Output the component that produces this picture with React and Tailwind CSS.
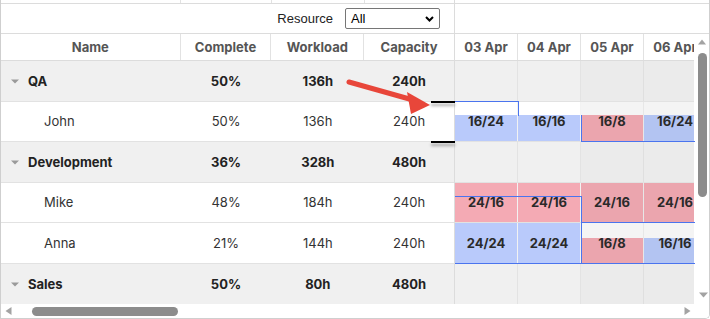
import React from "react";

const BLUE = "#b9cafb";
const BLUEW = "#b3c4f2";
const PINK = "#f4aab4";
const PINKW = "#eba5ae";

const rows = [
  { group: true, name: "QA", c: "50%", w: "136h", cap: "240h", h: "h-[41px]" },
  {
    group: false, name: "John", c: "50%", w: "136h", cap: "240h", h: "h-[40px]",
    cells: [
      { bg: BLUE, bh: 26, t: "16/24" },
      { bg: BLUE, bh: 26, t: "16/16" },
      { bg: PINKW, bh: 26, t: "16/8" },
      { bg: BLUEW, bh: 26, t: "16/24" },
    ],
  },
  { group: true, name: "Development", c: "36%", w: "328h", cap: "480h", h: "h-[41px]" },
  {
    group: false, name: "Mike", c: "48%", w: "184h", cap: "240h", h: "h-[40px]",
    cells: [
      { bg: PINK, bh: 39, t: "24/16" },
      { bg: PINK, bh: 39, t: "24/16" },
      { bg: PINKW, bh: 39, t: "24/16" },
      { bg: PINKW, bh: 39, t: "24/16" },
    ],
  },
  {
    group: false, name: "Anna", c: "21%", w: "144h", cap: "240h", h: "h-[41px]",
    cells: [
      { bg: BLUE, bh: 40, t: "24/24" },
      { bg: BLUE, bh: 40, t: "24/24" },
      { bg: PINKW, bh: 25, t: "16/8" },
      { bg: BLUEW, bh: 25, t: "16/16" },
    ],
  },
  { group: true, name: "Sales", c: "50%", w: "80h", cap: "480h", h: "h-[40px]" },
];

const days = ["03 Apr", "04 Apr", "05 Apr", "06 Apr"];

function Caret() {
  return (
    <svg width="8" height="5" viewBox="0 0 8 5" className="shrink-0">
      <path d="M0 0.5 L8 0.5 L4 4.5 Z" fill="#9a9a9a" />
    </svg>
  );
}

function GridRow({ r, last }) {
  const base = `${r.h} flex items-center ${last ? "" : "border-b border-[#e2e2e2]"} ${
    r.group ? "bg-[#f0f0f0] font-bold text-[#222]" : "bg-white text-[#333]"
  }`;
  return (
    <div className={base}>
      <div className={`w-[180px] flex items-center ${r.group ? "pl-[10px] gap-[9px]" : "pl-[43px]"}`}>
        {r.group && <Caret />}
        <span>{r.name}</span>
      </div>
      <div className="w-[91px] text-center">{r.c}</div>
      <div className="w-[93px] text-center">{r.w}</div>
      <div className="w-[90px] text-center">{r.cap}</div>
    </div>
  );
}

function GanttRow({ r, last }) {
  return (
    <div className={`${r.h} flex w-[252px] ${last ? "" : "border-b border-[#e2e2e2]"}`}>
      {days.map((d, i) => {
        const weekend = i >= 2;
        const bg = r.group
          ? weekend
            ? "bg-[#ebebeb]"
            : "bg-[#f0f0f0]"
          : weekend
          ? "bg-[#f4f4f4]"
          : "bg-white";
        const cell = r.cells ? r.cells[i] : null;
        return (
          <div
            key={d}
            className={`relative w-[63px] shrink-0 border-r border-black/[0.05] ${bg} flex items-center justify-center`}
          >
            {cell && (
              <div
                className="absolute left-0 right-0 bottom-0"
                style={{ height: cell.bh, backgroundColor: cell.bg }}
              />
            )}
            {cell && <span className="relative font-bold text-[#2a2a2a]">{cell.t}</span>}
          </div>
        );
      })}
    </div>
  );
}

export default function App() {
  const line = "absolute bg-[#4a74ee]";
  return (
    <div
      className="relative w-[710px] h-[319px] bg-white border-l border-r border-b border-[#cfcfcf] rounded-br-[5px] overflow-hidden text-[13px] leading-none"
      style={{ fontFamily: "Inter, 'Liberation Sans', sans-serif" }}
    >
      {/* top strip */}
      <div className="h-[4px] flex border-b border-[#dcdcdc]">
        <div className="w-[180px] border-r border-[#e2e2e2]" />
        <div className="w-[91px] border-r border-[#e2e2e2]" />
        <div className="w-[93px] border-r border-[#e2e2e2]" />
        <div className="w-[90px] border-r border-[#dcdcdc]" />
        <div className="flex-1" />
      </div>

      <div className="flex h-[300px]">
        {/* left grid */}
        <div className="w-[454px] border-r border-[#dcdcdc] flex flex-col">
          <div
            className="h-[30px] border-b border-[#dcdcdc] flex items-center justify-end pr-[14px] gap-[12px] text-[#222]"
            style={{ fontFamily: "'Liberation Sans', Arial, sans-serif" }}
          >
            <span className="text-[13px]">Resource</span>
            <div className="w-[95px] h-[21px] border border-[#767676] rounded-[2px] flex items-center justify-between pl-[5px] pr-[5px] text-[13px] text-black">
              <span>All</span>
              <svg width="9" height="6" viewBox="0 0 9 6">
                <path d="M1 1 L4.5 4.5 L8 1" stroke="#000" strokeWidth="2" fill="none" />
              </svg>
            </div>
          </div>
          <div className="h-[27px] border-b border-[#dcdcdc] flex items-center font-bold text-[#555]">
            <div className="w-[180px] h-full flex items-center justify-center border-r border-[#e2e2e2]">Name</div>
            <div className="w-[91px] h-full flex items-center justify-center border-r border-[#e2e2e2]">Complete</div>
            <div className="w-[93px] h-full flex items-center justify-center border-r border-[#e2e2e2]">Workload</div>
            <div className="w-[90px] h-full flex items-center justify-center">Capacity</div>
          </div>
          {rows.map((r, i) => (
            <GridRow key={r.name} r={r} last={i === rows.length - 1} />
          ))}
        </div>

        {/* right gantt */}
        <div className="flex-1 flex flex-col">
          <div className="h-[30px] border-b border-[#dcdcdc] bg-white" />
          <div className="flex flex-1">
            <div className="w-[239px] overflow-hidden flex flex-col">
              <div className="h-[27px] w-[252px] flex border-b border-[#dcdcdc] font-bold text-[#555]">
                {days.map((d) => (
                  <div
                    key={d}
                    className="w-[63px] shrink-0 border-r border-[#e2e2e2] flex items-center justify-center whitespace-nowrap"
                  >
                    {d}
                  </div>
                ))}
              </div>
              {rows.map((r, i) => (
                <GanttRow key={r.name} r={r} last={i === rows.length - 1} />
              ))}
            </div>
            {/* vertical scrollbar */}
            <div className="w-[15px] flex flex-col items-center bg-white">
              <svg width="8" height="6" viewBox="0 0 8 6" className="mt-[5px]">
                <path d="M0 5.5 L8 5.5 L4 0.5 Z" fill="#a3a3a3" />
              </svg>
              <div className="mt-[8px] ml-[1px] w-[9px] h-[144px] rounded-full bg-[#8c8c8c]" />
              <div className="flex-1" />
              <svg width="9" height="6" viewBox="0 0 9 6" className="mb-[6px] ml-[3px]">
                <path d="M0 0.5 L9 0.5 L4.5 5.5 Z" fill="#a3a3a3" />
              </svg>
            </div>
          </div>
        </div>
      </div>

      {/* horizontal scrollbar */}
      <div className="h-[14px] flex items-center bg-white">
        <svg width="7" height="8" viewBox="0 0 7 8" className="ml-[4px]">
          <path d="M6.5 0 L6.5 8 L0.5 4 Z" fill="#a3a3a3" />
        </svg>
        <div className="ml-[20px] w-[146px] h-[9px] rounded-full bg-[#8c8c8c]" />
        <div className="flex-1" />
        <svg width="7" height="8" viewBox="0 0 7 8" className="mr-[18px]">
          <path d="M0.5 0 L0.5 8 L6.5 4 Z" fill="#a3a3a3" />
        </svg>
      </div>

      {/* capacity step lines */}
      <div className={`${line} left-[454px] top-[101px] w-[64px] h-[1px]`} />
      <div className={`${line} left-[517px] top-[101px] w-[1px] h-[15px]`} />
      <div className={`${line} left-[580px] top-[115px] w-[1px] h-[27px]`} />
      <div className={`${line} left-[580px] top-[141px] w-[114px] h-[1px]`} />

      <div className={`${line} left-[454px] top-[196px] w-[127px] h-[1px]`} />
      <div className={`${line} left-[580px] top-[196px] w-[1px] h-[27px]`} />
      <div className={`${line} left-[580px] top-[222px] w-[114px] h-[1px]`} />

      <div className={`${line} left-[580px] top-[222px] w-[1px] h-[42px]`} />
      <div className={`${line} left-[454px] top-[263px] w-[240px] h-[1px]`} />

      {/* black markers */}
      <div className="absolute left-[430px] top-[101px] w-[24px] h-[2px] bg-black shadow-[0_3px_3px_rgba(0,0,0,0.35)]" />
      <div className="absolute left-[430px] top-[141px] w-[24px] h-[2px] bg-black shadow-[0_3px_3px_rgba(0,0,0,0.35)]" />

      {/* red arrow */}
      <svg className="absolute left-0 top-0 pointer-events-none" width="710" height="319">
        <line x1="348" y1="82" x2="412" y2="100" stroke="#e8463a" strokeWidth="5" strokeLinecap="round" />
        <polygon points="406,92 429,105 410,114" fill="#e8463a" />
      </svg>
    </div>
  );
}
